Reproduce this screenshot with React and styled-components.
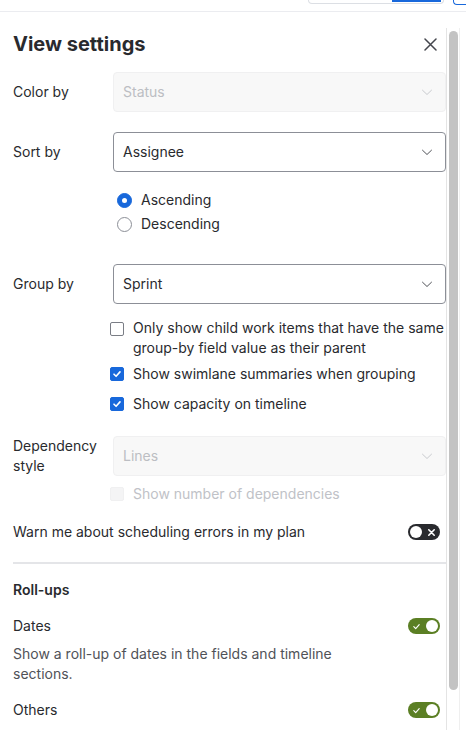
import styled, { createGlobalStyle } from "styled-components";

const GlobalStyle = createGlobalStyle`
  body {
    margin: 0;
    background: #ffffff;
    font-family: Inter, "Noto Sans", sans-serif;
    color: #292a2e;
    -webkit-font-smoothing: antialiased;
  }
  * { box-sizing: border-box; }
`;

const Page = styled.div`
  width: 466px;
  height: 742px;
  overflow: hidden;
`;

const TopBar = styled.div`
  height: 12px;
  border-bottom: 1px solid #ebecf0;
  display: flex;
  justify-content: flex-end;
  align-items: flex-start;
  gap: 9px;
  margin-right: -1px;
`;

const SearchStub = styled.div`
  width: 136px;
  height: 4px;
  border: 1px solid #dcdfe4;
  border-top: none;
  border-radius: 0 0 4px 4px;
  display: flex;
  justify-content: flex-end;
  padding-right: 2px;
`;

const SearchAccent = styled.div`
  width: 49px;
  height: 2px;
  background: #1868db;
`;

const ButtonStub = styled.div`
  width: 14px;
  height: 5px;
  border: 1px solid #1868db;
  border-top: none;
  border-right: none;
  border-radius: 0 0 0 4px;
`;

const Panel = styled.div`
  display: flex;
  padding-top: 16px;
  height: 718px;
`;

const Content = styled.div`
  flex: 0 0 446px;
  display: flex;
  flex-direction: column;
  padding-left: 13px;
  font-size: 14px;
  line-height: 20px;
`;

const Track = styled.div`
  width: 14px;
  height: 702px;
  border-left: 1px solid #e4e4e4;
  border-right: 1px solid #efefef;
  padding: 3px 0 0 2px;
`;

const Thumb = styled.div`
  width: 9px;
  height: 659px;
  border-radius: 5px;
  background: #c3c3c3;
`;

const Header = styled.div`
  margin-top: 4px;
  height: 24px;
  display: flex;
  align-items: center;
  justify-content: space-between;
  padding-right: 4px;
`;

const Title = styled.h1`
  margin: 0;
  font-size: 20px;
  line-height: 24px;
  font-weight: 700;
  color: #292a2e;
`;

const CloseButton = styled.button`
  width: 24px;
  height: 24px;
  border: none;
  background: none;
  padding: 0;
  display: flex;
  align-items: center;
  justify-content: center;
  color: #44464d;
`;

const FieldRow = styled.div`
  margin-top: ${(p) => p.$mt}px;
  display: flex;
  align-items: center;
  height: 40px;
`;

const Label = styled.div`
  width: 100px;
  flex-shrink: 0;
`;

const Select = styled.div`
  flex: 1;
  height: 40px;
  display: flex;
  align-items: center;
  justify-content: space-between;
  padding: 0 12px 0 9px;
  border-radius: 4px;
  border: 1px solid ${(p) => (p.$disabled ? "#f0f0f1" : "#8c8f97")};
  background: ${(p) => (p.$disabled ? "#f8f8f8" : "#ffffff")};
  color: ${(p) => (p.$disabled ? "#bcbec3" : "#292a2e")};
`;

const RadioGroup = styled.div`
  margin-top: 16px;
  margin-left: 104px;
  display: flex;
  flex-direction: column;
`;

const RadioItem = styled.label`
  height: 24px;
  display: flex;
  align-items: center;
  gap: 9px;
`;

const RadioCircle = styled.span`
  width: 15px;
  height: 15px;
  border-radius: 50%;
  display: flex;
  align-items: center;
  justify-content: center;
  background: ${(p) => (p.$checked ? "#1868db" : "#ffffff")};
  border: 1px solid ${(p) => (p.$checked ? "#1868db" : "#8c8f97")};
  &::after {
    content: "";
    width: 5px;
    height: 5px;
    border-radius: 50%;
    background: ${(p) => (p.$checked ? "#ffffff" : "transparent")};
  }
`;

const CheckItem = styled.label`
  margin-top: ${(p) => p.$mt}px;
  margin-left: 97px;
  display: flex;
  align-items: flex-start;
  gap: 9px;
  color: ${(p) => (p.$disabled ? "#c0c2c7" : "#292a2e")};
`;

const Box = styled.span`
  flex-shrink: 0;
  width: 14px;
  height: 14px;
  margin-top: ${(p) => p.$offset || 3}px;
  border-radius: 2px;
  display: flex;
  align-items: center;
  justify-content: center;
  background: ${(p) => (p.$checked ? "#1868db" : p.$disabled ? "#f4f4f5" : "#ffffff")};
  border: 1px solid
    ${(p) => (p.$checked ? "#1868db" : p.$disabled ? "#f0f0f1" : "#7a7d85")};
`;

const ToggleRow = styled.div`
  margin-top: ${(p) => p.$mt}px;
  height: ${(p) => p.$h || 20}px;
  display: flex;
  align-items: center;
  justify-content: space-between;
  padding-right: 6px;
`;

const Toggle = styled.span`
  width: 32px;
  height: 16px;
  border-radius: 8px;
  background: ${(p) => (p.$on ? "#5b7f24" : "#292a2e")};
  display: flex;
  align-items: center;
  justify-content: space-between;
  flex-direction: ${(p) => (p.$on ? "row" : "row-reverse")};
  padding-left: ${(p) => (p.$on ? 4 : 2)}px;
  padding-right: ${(p) => (p.$on ? 2 : 4)}px;
`;

const Knob = styled.span`
  width: 12px;
  height: 12px;
  border-radius: 50%;
  background: #ffffff;
`;

const Divider = styled.hr`
  margin: 18px 0 0;
  border: none;
  height: 2px;
  background: #e4e5e8;
`;

const Heading = styled.div`
  margin-top: 16px;
  font-weight: 600;
`;

const Description = styled.p`
  margin: 8px 0 0;
  width: 340px;
  color: #505258;
`;

function Chevron({ color }) {
  return (
    <svg width="12" height="12" viewBox="0 0 12 12" fill="none">
      <path d="M1.5 4.2 6 8.5l4.5-4.3" stroke={color} strokeWidth="1" strokeLinecap="round" strokeLinejoin="round" />
    </svg>
  );
}

function Tick({ size = 10, width = 1.6 }) {
  return (
    <svg width={size} height={size} viewBox="0 0 10 10" fill="none">
      <path d="M2 5.2 4.1 7.3 8 2.9" stroke="#ffffff" strokeWidth={width} strokeLinecap="round" strokeLinejoin="round" />
    </svg>
  );
}

function Cross() {
  return (
    <svg width="9" height="9" viewBox="0 0 10 10" fill="none">
      <path d="M2 2l6 6M8 2 2 8" stroke="#ffffff" strokeWidth="1.8" strokeLinecap="round" />
    </svg>
  );
}

function Field({ label, value, disabled, mt }) {
  return (
    <FieldRow $mt={mt}>
      <Label>{label}</Label>
      <Select $disabled={disabled}>
        <span>{value}</span>
        <Chevron color={disabled ? "#c9cbcf" : "#505258"} />
      </Select>
    </FieldRow>
  );
}

function Check({ checked, disabled, mt = 0, offset, children }) {
  return (
    <CheckItem $mt={mt} $disabled={disabled}>
      <Box $checked={checked} $disabled={disabled} $offset={offset}>
        {checked && <Tick />}
      </Box>
      <span>{children}</span>
    </CheckItem>
  );
}

function Switch({ on }) {
  return (
    <Toggle $on={on}>
      {on ? <Tick size={9} width={1.3} /> : <Cross />}
      <Knob />
    </Toggle>
  );
}

export default function App() {
  return (
    <>
      <GlobalStyle />
      <Page>
        <TopBar>
          <SearchStub>
            <SearchAccent />
          </SearchStub>
          <ButtonStub />
        </TopBar>
        <Panel>
          <Content>
            <Header>
              <Title>View settings</Title>
              <CloseButton aria-label="Close">
                <svg width="13" height="13" viewBox="0 0 13 13" fill="none">
                  <path d="M1 1l11 11M12 1 1 12" stroke="#44464d" strokeWidth="1.5" strokeLinecap="round" />
                </svg>
              </CloseButton>
            </Header>

            <Field label="Color by" value="Status" disabled mt={16} />
            <Field label="Sort by" value="Assignee" mt={20} />

            <RadioGroup>
              <RadioItem>
                <RadioCircle $checked />
                Ascending
              </RadioItem>
              <RadioItem>
                <RadioCircle />
                Descending
              </RadioItem>
            </RadioGroup>

            <Field label="Group by" value="Sprint" mt={28} />

            <Check mt={14} offset={4}>
              Only show child work items that have the same group-by field value as their parent
            </Check>
            <Check checked mt={6}>
              Show swimlane summaries when grouping
            </Check>
            <Check checked mt={10}>
              Show capacity on timeline
            </Check>

            <Field label={<>Dependency<br />style</>} value="Lines" disabled mt={22} />

            <Check disabled mt={8}>
              Show number of dependencies
            </Check>

            <ToggleRow $mt={16} $h={24}>
              <span>Warn me about scheduling errors in my plan</span>
              <Switch />
            </ToggleRow>

            <Divider />

            <Heading>Roll-ups</Heading>

            <ToggleRow $mt={16}>
              <span>Dates</span>
              <Switch on />
            </ToggleRow>
            <Description>
              Show a roll-up of dates in the fields and timeline sections.
            </Description>
            <ToggleRow $mt={16}>
              <span>Others</span>
              <Switch on />
            </ToggleRow>
          </Content>
          <Track>
            <Thumb />
          </Track>
        </Panel>
      </Page>
    </>
  );
}
